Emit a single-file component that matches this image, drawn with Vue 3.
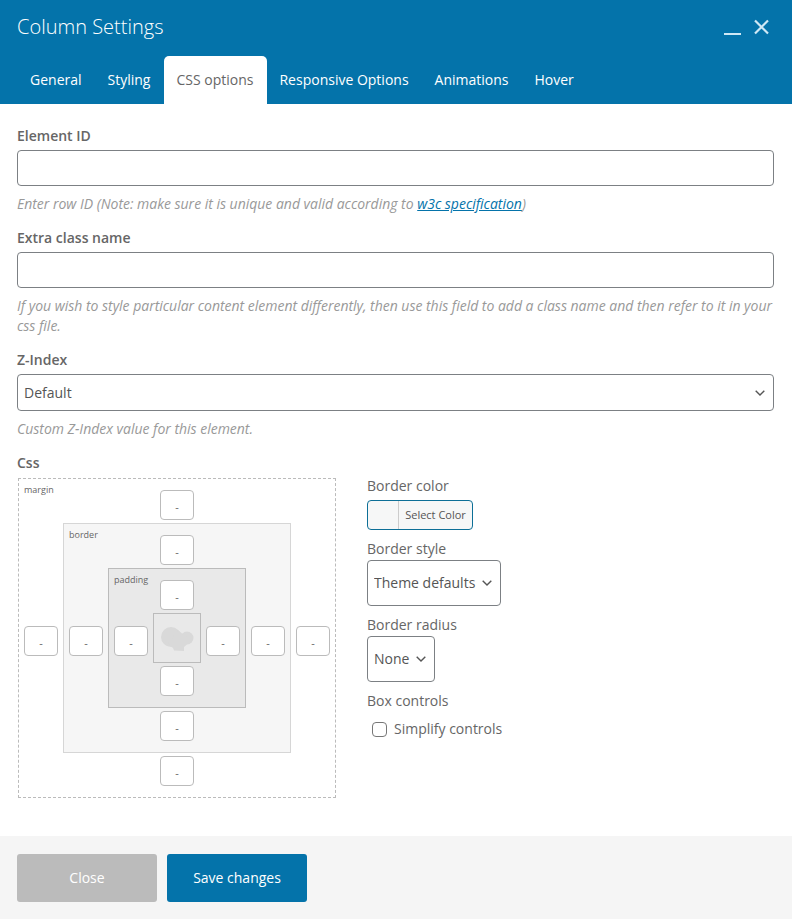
<script setup>
const tabs = ['General', 'Styling', 'CSS options', 'Responsive Options', 'Animations', 'Hover']
const activeTab = 'CSS options'
</script>

<template>
  <div class="dialog">
    <header class="head">
      <div class="title-row">
        <h1 class="title">Column Settings</h1>
        <div class="win-controls">
          <svg class="ctl-min" width="17" height="4" viewBox="0 0 17 4"><rect width="17" height="2" y="1" fill="#cfe8f5" /></svg>
          <svg class="ctl-close" width="17" height="17" viewBox="0 0 17 17"><path d="M2 1.500l13 13M15 1.500L2 14.500" stroke="#cfe8f5" stroke-width="2.2" fill="none" /></svg>
        </div>
      </div>
      <nav class="tabs">
        <a v-for="tab in tabs" :key="tab" class="tab" :class="{ active: tab === activeTab }">{{ tab }}</a>
      </nav>
    </header>

    <main class="content">
      <div class="field">
        <label class="label">Element ID</label>
        <input class="text-input" type="text" />
        <p class="help">Enter row ID (Note: make sure it is unique and valid according to <a class="link">w3c specification</a>)</p>
      </div>
      <div class="field">
        <label class="label">Extra class name</label>
        <input class="text-input" type="text" />
        <p class="help">If you wish to style particular content element differently, then use this field to add a class name and then refer to it in your css file.</p>
      </div>
      <div class="field">
        <label class="label">Z-Index</label>
        <div class="select-wrap">
          <select class="select wide"><option>Default</option></select>
          <svg class="chevron" width="10" height="7" viewBox="0 0 10 7"><path d="M.7 1.200L5 5.500l4.300-4.300" stroke="#555" stroke-width="1.400" fill="none" /></svg>
        </div>
        <p class="help">Custom Z-Index value for this element.</p>
      </div>

      <label class="label css-label">Css</label>
      <div class="css-row">
        <div class="ring margin">
          <span class="ring-name">margin</span>
          <input class="box-input top" placeholder="-" />
          <input class="box-input left" placeholder="-" />
          <div class="ring border">
            <span class="ring-name">border</span>
            <input class="box-input top" placeholder="-" />
            <input class="box-input left" placeholder="-" />
            <div class="ring padding">
              <span class="ring-name">padding</span>
              <input class="box-input top" placeholder="-" />
              <input class="box-input left" placeholder="-" />
              <div class="core">
                <svg width="46" height="48" viewBox="0 0 46 48">
                  <g fill="#d9d9d9">
                    <circle cx="17" cy="23" r="10" />
                    <circle cx="33" cy="24" r="6.5" />
                    <path d="M14 30L24 16L37 27L30 33L30 37L20 36.500L19 34Z" />
                  </g>
                </svg>
              </div>
              <input class="box-input right" placeholder="-" />
              <input class="box-input bottom" placeholder="-" />
            </div>
            <input class="box-input right" placeholder="-" />
            <input class="box-input bottom" placeholder="-" />
          </div>
          <input class="box-input right" placeholder="-" />
          <input class="box-input bottom" placeholder="-" />
        </div>

        <div class="css-side">
          <div class="side-label first">Border color</div>
          <button class="color-btn"><span class="swatch"></span><span class="color-text">Select Color</span></button>
          <div class="side-label">Border style</div>
          <div class="select-wrap">
            <select class="select tall"><option>Theme defaults</option></select>
            <svg class="chevron" width="10" height="7" viewBox="0 0 10 7"><path d="M.7 1.200L5 5.500l4.300-4.300" stroke="#555" stroke-width="1.400" fill="none" /></svg>
          </div>
          <div class="side-label">Border radius</div>
          <div class="select-wrap">
            <select class="select tall"><option>None</option></select>
            <svg class="chevron" width="10" height="7" viewBox="0 0 10 7"><path d="M.7 1.200L5 5.500l4.300-4.300" stroke="#555" stroke-width="1.400" fill="none" /></svg>
          </div>
          <div class="side-label">Box controls</div>
          <label class="check"><input type="checkbox" /><span>Simplify controls</span></label>
        </div>
      </div>
    </main>

    <footer class="foot">
      <button class="btn close">Close</button>
      <button class="btn save">Save changes</button>
    </footer>
  </div>
</template>

<style>
html, body { margin: 0; background: #fff; }
</style>

<style scoped>
.dialog {
  width: 792px;
  height: 919px;
  display: flex;
  flex-direction: column;
  font-family: "Open Sans", "Liberation Sans", sans-serif;
  font-size: 14px;
  color: #555;
  overflow: hidden;
}
.head {
  background: #0473aa;
  height: 104px;
  box-sizing: border-box;
  padding: 0 17px;
  display: flex;
  flex-direction: column;
  justify-content: space-between;
}
.title-row {
  display: flex;
  justify-content: space-between;
  align-items: center;
  box-sizing: border-box;
  height: 56px;
  padding-bottom: 4px;
}
.title {
  margin: 0;
  font-size: 20px;
  font-weight: 300;
  color: #fff;
  line-height: 27px;
}
.win-controls {
  display: flex;
  align-items: flex-end;
  gap: 12px;
  margin-right: 5px;
  padding-top: 2px;
}
.tabs { display: flex; height: 48px; }
.tab {
  padding: 0 13px;
  line-height: 48px;
  font-weight: 500;
  color: #fff;
  border-radius: 5px 5px 0 0;
}
.tab.active {
  background: #fff;
  color: #666;
  font-weight: 400;
  margin: 0 -1px 0 1px;
  padding: 0 14px 0 12px;
}
.content {
  flex: 1;
  padding: 22px 18px 0 17px;
}
.field { margin-bottom: 14px; }
.label {
  display: block;
  font-weight: 600;
  line-height: 20px;
  margin-bottom: 4px;
  color: #666;
}
.text-input {
  display: block;
  box-sizing: border-box;
  width: 757px;
  height: 36px;
  border: 1px solid #7c8084;
  border-radius: 4px;
  background: #fff;
  outline: none;
}
.help {
  margin: 8px 0 0;
  font-style: italic;
  line-height: 20px;
  letter-spacing: -0.015px;
  color: #999;
}
.link {
  color: #0473aa;
  text-decoration: underline;
}
.select-wrap { position: relative; }
.select {
  appearance: none;
  box-sizing: border-box;
  border: 1px solid #7c8084;
  border-radius: 4px;
  background-color: #fff;
  color: #555;
  font: inherit;
  padding: 0 24px 0 6px;
  display: block;
}
.select.wide { width: 757px; height: 37px; }
.select.tall { height: 46px; padding-bottom: 2px; }
.chevron {
  position: absolute;
  right: 9px;
  top: 50%;
  transform: translateY(-50%);
  pointer-events: none;
}
.css-label { margin-bottom: 5px; }
.css-row {
  display: flex;
  align-items: flex-start;
  padding-left: 1px;
}
.ring {
  position: relative;
  box-sizing: border-box;
  display: grid;
  grid-template-columns: 44px auto 44px;
  grid-template-rows: 44px auto 44px;
  justify-items: center;
}
.ring.margin { border: 1px dashed #bbb; width: 318px; background: #fff; }
.ring.border { border: 1px solid #d6d6d6; background: #f6f6f6; }
.ring.padding { border: 1px solid #bbb; background: #e9e9e9; }
.ring-name {
  position: absolute;
  left: 5px;
  top: 5px;
  font-size: 9px;
  line-height: 12px;
  color: #666;
}
.box-input {
  box-sizing: border-box;
  width: 34px;
  height: 30px;
  border: 1px solid #bbb;
  border-radius: 4px;
  background: #fff;
  text-align: center;
  font-family: inherit;
  font-size: 11px;
  padding: 2px 0 0;
  outline: none;
}
.box-input::placeholder { color: #666; opacity: 1; }
.box-input.top { grid-column: 2; grid-row: 1; margin-top: 11px; }
.box-input.left { grid-column: 1; grid-row: 2; align-self: center; margin-top: 6px; }
.box-input.right { grid-column: 3; grid-row: 2; align-self: center; margin-top: 6px; }
.box-input.bottom { grid-column: 2; grid-row: 3; margin-top: 3px; }
.ring > .ring, .core { grid-column: 2; grid-row: 2; }
.core {
  box-sizing: border-box;
  width: 48px;
  height: 50px;
  border: 1px solid #bbb;
  display: flex;
}
.css-side {
  margin-left: 31px;
  display: flex;
  flex-direction: column;
  align-items: flex-start;
}
.side-label { line-height: 20px; margin: 9px 0 1px; color: #666; }
.side-label.first { margin-top: -2px; margin-bottom: 4px; }
.color-btn {
  box-sizing: border-box;
  width: 106px;
  height: 30px;
  display: flex;
  align-items: stretch;
  padding: 0;
  border: 1px solid #0d6f97;
  border-radius: 4px;
  background: #f6f7f7;
  font-family: inherit;
}
.swatch { width: 30px; border-right: 1px solid #ccc; }
.color-text {
  flex: 1;
  font-size: 11px;
  line-height: 28px;
  color: #555;
  text-align: center;
}
.check {
  display: flex;
  align-items: center;
  gap: 5px;
  margin: 7px 0 0 5px;
  line-height: 20px;
  color: #666;
}
.check input {
  appearance: none;
  box-sizing: border-box;
  width: 15px;
  height: 15px;
  margin: 1px 2px 0 0;
  border: 1px solid #777;
  border-radius: 4px;
  background: #fff;
}
.foot {
  height: 83px;
  box-sizing: border-box;
  background: #f5f5f5;
  padding: 18px 17px 17px;
  display: flex;
  gap: 10px;
}
.btn {
  width: 140px;
  height: 48px;
  border: none;
  border-radius: 3px;
  padding: 0 0 2px;
  font-family: inherit;
  font-size: 14px;
  font-weight: 500;
  color: #fff;
}
.btn.close { background: #bbb; }
.btn.save { background: #0473aa; }
</style>
